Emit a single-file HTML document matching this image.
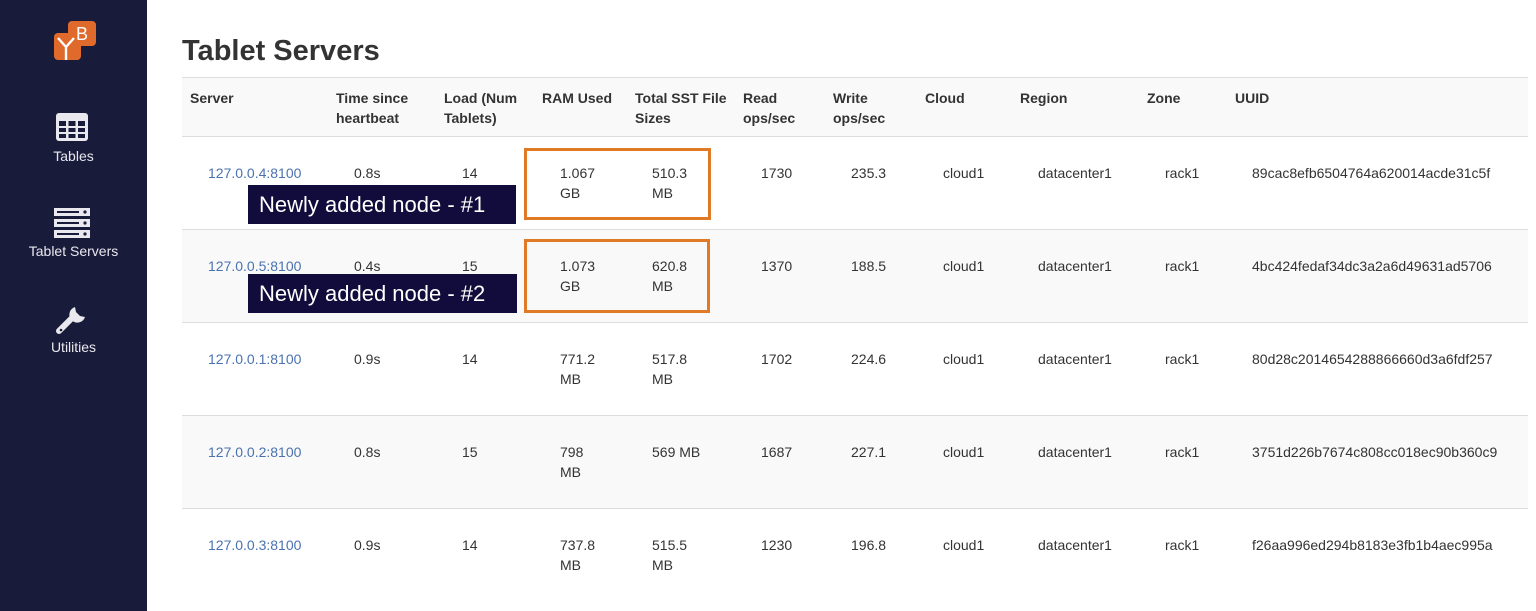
<!DOCTYPE html>
<html><head><meta charset="utf-8"><style>
*{margin:0;padding:0;box-sizing:border-box}
body{width:1536px;height:611px;overflow:hidden;background:#fff;font-family:"Liberation Sans",sans-serif;color:#333;position:relative}
.sb{position:absolute;left:0;top:0;width:147px;height:611px;background:#191b3a}
.nav{position:absolute;left:0;width:147px;text-align:center;color:#e8e8ee;font-size:14px}
.a{position:absolute;font-size:14px;line-height:20px;white-space:nowrap}
.h{font-weight:bold}
.row{position:absolute;left:182px;width:1346px;border-top:1px solid #ddd}
.g{background:#f9f9f9}
.lnk{color:#4a72b0}
.ob{position:absolute;border:3px solid #e07a26}
.lb{position:absolute;background:#120c3c;color:#fff;font-size:22px;line-height:39px;padding-left:11px}
</style></head><body>
<div class="sb">
 <svg style="position:absolute;left:53px;top:20px" width="44" height="40" viewBox="0 0 44 40">
  <rect x="15" y="1" width="28" height="25" rx="4" fill="#e06a2c"/>
  <rect x="1" y="13" width="27" height="27" rx="4" fill="#e06a2c"/>
  <path d="M5 18 L13 27 L21 18 M13 27 V40" stroke="#fff" stroke-width="2.4" fill="none"/>
  <text x="23" y="20" font-family="Liberation Sans" font-size="18" fill="#fff">B</text>
 </svg>
 <svg style="position:absolute;left:55px;top:112px" width="34" height="30" viewBox="0 0 34 30">
  <rect x="1" y="1" width="32" height="28" rx="3" fill="#e8e8ee"/>
  <g fill="#191b3a"><rect x="4" y="9" width="7" height="5"/><rect x="13.5" y="9" width="7" height="5"/><rect x="23" y="9" width="7" height="5"/>
  <rect x="4" y="16" width="7" height="4"/><rect x="13.5" y="16" width="7" height="4"/><rect x="23" y="16" width="7" height="4"/>
  <rect x="4" y="22" width="7" height="4"/><rect x="13.5" y="22" width="7" height="4"/><rect x="23" y="22" width="7" height="4"/></g>
 </svg>
 <div class="nav" style="top:148px">Tables</div>
 <svg style="position:absolute;left:54px;top:208px" width="36" height="30" viewBox="0 0 36 30">
  <g fill="#e8e8ee"><rect x="0" y="0" width="36" height="8"/><rect x="0" y="11" width="36" height="8"/><rect x="0" y="22" width="36" height="8"/></g>
  <g fill="#191b3a"><rect x="3" y="3" width="22" height="2"/><rect x="3" y="14" width="22" height="2"/><rect x="3" y="25" width="22" height="2"/>
  <circle cx="31" cy="4" r="1.6"/><circle cx="31" cy="15" r="1.6"/><circle cx="31" cy="26" r="1.6"/></g>
 </svg>
 <div class="nav" style="top:243px">Tablet Servers</div>
 <svg style="position:absolute;left:55px;top:303px" width="34" height="34" viewBox="0 0 34 34">
  <path d="M4 28 L18 14" stroke="#e8e8ee" stroke-width="6" stroke-linecap="round"/>
  <path d="M20 4 A8 8 0 1 0 30 14 L25 13 L21 9 Z" fill="#e8e8ee"/>
  <circle cx="6" cy="27" r="1.3" fill="#191b3a"/>
 </svg>
 <div class="nav" style="top:339px">Utilities</div>
</div>
<div style="position:absolute;left:182px;top:35px;font-size:29px;font-weight:bold;color:#333">Tablet Servers</div>
<div class="row g" style="top:77px;height:60px"></div>
<div class="row" style="top:136px;height:93px"></div>
<div class="row g" style="top:229px;height:93px"></div>
<div class="row" style="top:322px;height:93px"></div>
<div class="row g" style="top:415px;height:93px"></div>
<div class="row" style="top:508px;height:93px"></div>
<div class="a h" style="left:190px;top:88px">Server</div>
<div class="a h" style="left:336px;top:88px">Time since<br>heartbeat</div>
<div class="a h" style="left:444px;top:88px">Load (Num<br>Tablets)</div>
<div class="a h" style="left:542px;top:88px">RAM Used</div>
<div class="a h" style="left:635px;top:88px">Total SST File<br>Sizes</div>
<div class="a h" style="left:743px;top:88px">Read<br>ops/sec</div>
<div class="a h" style="left:833px;top:88px">Write<br>ops/sec</div>
<div class="a h" style="left:925px;top:88px">Cloud</div>
<div class="a h" style="left:1020px;top:88px">Region</div>
<div class="a h" style="left:1147px;top:88px">Zone</div>
<div class="a h" style="left:1235px;top:88px">UUID</div>

<div style="position:absolute;top:163px;left:0">
<div class="a lnk" style="left:208px">127.0.0.4:8100</div><div class="a" style="left:354px">0.8s</div><div class="a" style="left:462px">14</div><div class="a" style="left:560px">1.067<br>GB</div><div class="a" style="left:652px">510.3<br>MB</div><div class="a" style="left:761px">1730</div><div class="a" style="left:851px">235.3</div><div class="a" style="left:943px">cloud1</div><div class="a" style="left:1038px">datacenter1</div><div class="a" style="left:1165px">rack1</div><div class="a" style="left:1252px">89cac8efb6504764a620014acde31c5f</div></div>
<div style="position:absolute;top:256px;left:0">
<div class="a lnk" style="left:208px">127.0.0.5:8100</div><div class="a" style="left:354px">0.4s</div><div class="a" style="left:462px">15</div><div class="a" style="left:560px">1.073<br>GB</div><div class="a" style="left:652px">620.8<br>MB</div><div class="a" style="left:761px">1370</div><div class="a" style="left:851px">188.5</div><div class="a" style="left:943px">cloud1</div><div class="a" style="left:1038px">datacenter1</div><div class="a" style="left:1165px">rack1</div><div class="a" style="left:1252px">4bc424fedaf34dc3a2a6d49631ad5706</div></div>
<div style="position:absolute;top:349px;left:0">
<div class="a lnk" style="left:208px">127.0.0.1:8100</div><div class="a" style="left:354px">0.9s</div><div class="a" style="left:462px">14</div><div class="a" style="left:560px">771.2<br>MB</div><div class="a" style="left:652px">517.8<br>MB</div><div class="a" style="left:761px">1702</div><div class="a" style="left:851px">224.6</div><div class="a" style="left:943px">cloud1</div><div class="a" style="left:1038px">datacenter1</div><div class="a" style="left:1165px">rack1</div><div class="a" style="left:1252px">80d28c2014654288866660d3a6fdf257</div></div>
<div style="position:absolute;top:442px;left:0">
<div class="a lnk" style="left:208px">127.0.0.2:8100</div><div class="a" style="left:354px">0.8s</div><div class="a" style="left:462px">15</div><div class="a" style="left:560px">798<br>MB</div><div class="a" style="left:652px">569 MB</div><div class="a" style="left:761px">1687</div><div class="a" style="left:851px">227.1</div><div class="a" style="left:943px">cloud1</div><div class="a" style="left:1038px">datacenter1</div><div class="a" style="left:1165px">rack1</div><div class="a" style="left:1252px">3751d226b7674c808cc018ec90b360c9</div></div>
<div style="position:absolute;top:535px;left:0">
<div class="a lnk" style="left:208px">127.0.0.3:8100</div><div class="a" style="left:354px">0.9s</div><div class="a" style="left:462px">14</div><div class="a" style="left:560px">737.8<br>MB</div><div class="a" style="left:652px">515.5<br>MB</div><div class="a" style="left:761px">1230</div><div class="a" style="left:851px">196.8</div><div class="a" style="left:943px">cloud1</div><div class="a" style="left:1038px">datacenter1</div><div class="a" style="left:1165px">rack1</div><div class="a" style="left:1252px">f26aa996ed294b8183e3fb1b4aec995a</div></div>

<div class="ob" style="left:524px;top:148px;width:187px;height:72px"></div>
<div class="ob" style="left:524px;top:239px;width:186px;height:74px"></div>
<div class="lb" style="left:248px;top:185px;width:268px;height:39px">Newly added node - #1</div>
<div class="lb" style="left:248px;top:274px;width:269px;height:39px">Newly added node - #2</div>
</body></html>
